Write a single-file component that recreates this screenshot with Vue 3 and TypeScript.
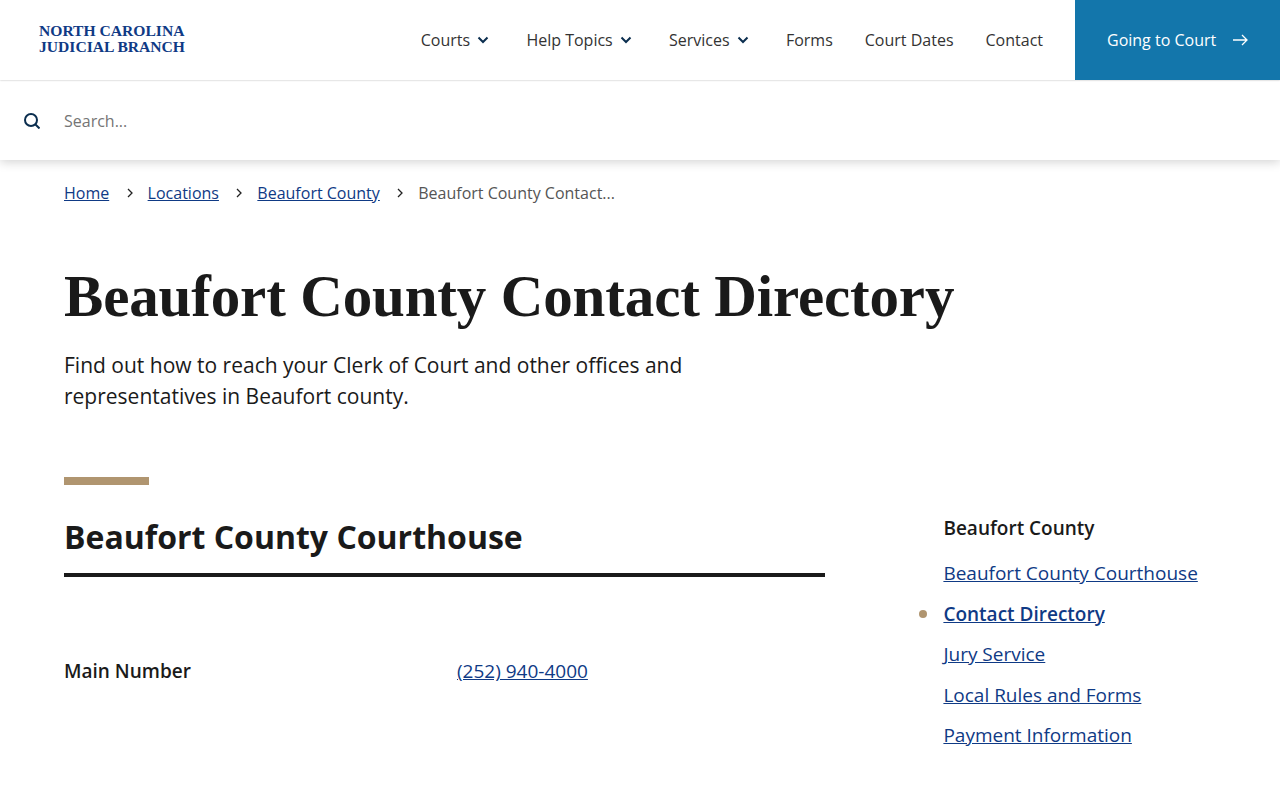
<script setup lang="ts">
interface Crumb { label: string; current?: boolean }
const nav = [
  { label: 'Courts', menu: true },
  { label: 'Help Topics', menu: true },
  { label: 'Services', menu: true },
  { label: 'Forms', menu: false },
  { label: 'Court Dates', menu: false },
  { label: 'Contact', menu: false },
]
const crumbs: Crumb[] = [
  { label: 'Home' },
  { label: 'Locations' },
  { label: 'Beaufort County' },
  { label: 'Beaufort County Contact...', current: true },
]
const side = [
  { label: 'Beaufort County Courthouse' },
  { label: 'Contact Directory', active: true },
  { label: 'Jury Service' },
  { label: 'Local Rules and Forms' },
  { label: 'Payment Information' },
]
</script>

<template>
  <div class="page">
    <header class="top">
      <a class="logo" href="#"><span>NORTH CAROLINA</span><span>JUDICIAL BRANCH</span></a>
      <nav class="nav">
        <a v-for="n in nav" :key="n.label" class="nav-item" href="#">
          {{ n.label }}
          <svg v-if="n.menu" class="chev" width="12" height="8" viewBox="0 0 12 8" fill="none"><path d="M1.5 1.5 6 6l4.5-4.5" stroke="#0b2e4f" stroke-width="2" /></svg>
        </a>
      </nav>
      <a class="cta" href="#">
        Going to Court
        <svg width="16" height="12" viewBox="0 0 16 12" fill="none"><path d="M1 6h14M10 1l5 5-5 5" stroke="#fff" stroke-width="1.3" /></svg>
      </a>
    </header>
    <div class="search">
      <svg width="16" height="16" viewBox="0 0 16 16" fill="none"><circle cx="7" cy="7" r="6" stroke="#0b2e4f" stroke-width="2" /><path d="m11.5 11.5 4 4" stroke="#0b2e4f" stroke-width="2" /></svg>
      <span class="placeholder">Search...</span>
    </div>
    <main class="main">
      <ol class="crumbs">
        <li v-for="(c, i) in crumbs" :key="c.label">
          <span v-if="c.current" class="current">{{ c.label }}</span>
          <a v-else href="#">{{ c.label }}</a>
          <svg v-if="i < crumbs.length - 1" class="sep" width="6" height="10" viewBox="0 0 6 10" fill="none"><path d="m1 1 4 4-4 4" stroke="#222" stroke-width="1.3" /></svg>
        </li>
      </ol>
      <h1>Beaufort County Contact Directory</h1>
      <p class="intro">Find out how to reach your Clerk of Court and other offices and representatives in Beaufort county.</p>
      <div class="cols">
        <section class="content">
          <div class="rule"></div>
          <h2>Beaufort County Courthouse</h2>
          <div class="row">
            <strong>Main Number</strong>
            <a href="#">(252) 940-4000</a>
          </div>
        </section>
        <aside class="side">
          <h3>Beaufort County</h3>
          <ul>
            <li v-for="s in side" :key="s.label" :class="{ active: s.active }"><a href="#">{{ s.label }}</a></li>
          </ul>
        </aside>
      </div>
    </main>
  </div>
</template>

<style>
html, body { margin: 0; background: #fff; }
</style>

<style scoped>
.page { font-family: "Open Sans", sans-serif; color: #1a1a1a; height: 800px; overflow: hidden; }
a { color: #0f3a85; }
.top { height: 80px; display: flex; align-items: center; padding-left: 39px; box-sizing: border-box; box-shadow: 0 0 2px rgba(0,0,0,.3); position: relative; z-index: 2; background: #fff; }
.logo { display: flex; flex-direction: column; padding-bottom: 2px; font-family: "Liberation Serif", serif; font-weight: 700; font-size: 15.6px; line-height: 16px; color: #0f3a85; text-decoration: none; }
.nav { margin-left: auto; display: flex; align-items: center; gap: 32px; font-size: 16px; }
.nav-item { color: #333; text-decoration: none; display: flex; align-items: center; gap: 7px; }
.chev { margin-right: 5.3px; }
.cta { margin-left: 32px; width: 205px; height: 80px; padding-left: 32px; box-sizing: border-box; background: #1376ab; color: #fff; text-decoration: none; font-size: 16px; display: flex; align-items: center; gap: 16px; }
.search { height: 80px; box-sizing: border-box; padding: 2px 0 0 24px; display: flex; align-items: center; gap: 24px; box-shadow: 0 2px 10px rgba(0,0,0,.18); position: relative; z-index: 1; background: #fff; }
.placeholder { font-size: 16px; color: #757575; }
.main { padding: 0 64px; }
.crumbs { list-style: none; margin: 0; padding: 22px 0 0; display: flex; font-size: 16px; line-height: 22px; }
.crumbs li { display: flex; align-items: center; }
.sep { margin: 0 15px 0 17.4px; }
.current { color: #555; }
h1 { margin: 54px 0 0; font-family: "Liberation Serif", serif; font-weight: 700; font-size: 59px; line-height: 76px; letter-spacing: -.15px; color: #1a1a1a; }
.intro { margin: 16px 0 0; width: 680px; font-size: 21px; line-height: 31px; }
.cols { display: flex; margin-top: 65px; }
.content { width: 761px; }
.rule { width: 85px; height: 8px; background: #b09570; }
h2 { margin: 0; padding: 30px 0 14px; font-size: 32px; line-height: 44px; font-weight: 700; border-bottom: 4px solid #1a1a1a; }
.row { display: flex; margin-top: 80px; font-size: 19px; line-height: 28px; }
.row strong { width: 393px; font-weight: 600; }
.side { margin-left: 118.4px; padding-top: 37px; }
h3 { margin: 0; font-size: 19px; line-height: 28px; font-weight: 600; }
ul { list-style: none; margin: 17px 0 0; padding: 0; font-size: 19px; line-height: 28px; }
ul li { margin-bottom: 12.5px; position: relative; }
.active a { font-weight: 600; }
.active::before { content: ""; position: absolute; left: -24.5px; top: 10px; width: 8.5px; height: 8.5px; border-radius: 50%; background: #b09570; }
</style>
